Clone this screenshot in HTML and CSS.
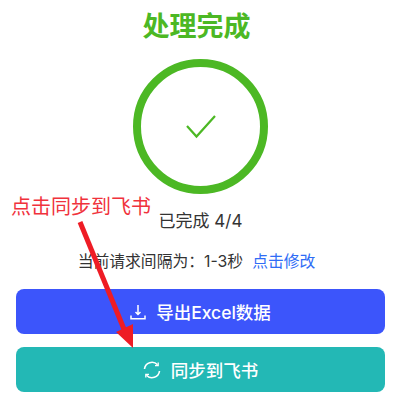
FILE: index.html
```html
<!DOCTYPE html>
<html lang="zh-CN">
<head>
  <meta charset="UTF-8">
  <meta name="viewport" content="width=device-width, initial-scale=1.0">
  <title>处理完成</title>
  <link rel="stylesheet" href="styles.css">
</head>
<body>
  <div class="page">
    <h1 class="title">处理完成</h1>

    <div class="ring">
      <svg class="check" viewBox="0 0 30 24" width="30" height="24">
        <path d="M1 11 L10.500 21.500 L29 1" fill="none" stroke="#4cb824" stroke-width="2.200"/>
      </svg>
    </div>

    <div class="progress">已完成 4/4</div>

    <div class="interval">
      <span>当前请求间隔为：1-3秒</span>
      <a class="edit-link">点击修改</a>
    </div>

    <button class="btn btn-export">
      <svg viewBox="0 0 16 16" width="16" height="16">
        <path d="M8 1 V10.500 M5.500 8 L8 10.500 L10.500 8 M1 11.500 V14.800 H15 V11.500" fill="none" stroke="#fff" stroke-width="1.500"/>
      </svg>
      导出Excel数据
    </button>

    <button class="btn btn-sync">
      <svg viewBox="0 0 18 18" width="18" height="18">
        <path d="M1.500 8 A7.500 7.500 0 0 1 14.500 3.800 M16.500 10 A7.500 7.500 0 0 1 3.500 14.200" fill="none" stroke="#fff" stroke-width="1.600"/>
        <path d="M12 4.700 H15.200 V1.600 M6 13.300 H2.800 V16.400" fill="none" stroke="#fff" stroke-width="1.300"/>
      </svg>
      同步到飞书
    </button>
  </div>

  <!-- annotation drawn over the screenshot -->
  <div class="note">点击同步到飞书</div>
  <svg class="arrow" viewBox="0 0 400 400" width="400" height="400">
    <path d="M80 222 L126 334" stroke="#ee1c25" stroke-width="5" fill="none"/>
    <path d="M133 348 L116 332 L133 324 Z" fill="#ee1c25"/>
  </svg>
</body>
</html>
```

FILE: styles.css
```css
body {
  margin: 0;
  background-color: #fff;
  font-family: Inter, "Noto Sans CJK SC", sans-serif;
  color: #333;
  overflow: hidden;
}

.page {
  display: flex;
  flex-direction: column;
  align-items: center;
  padding: 0 15px 0 16px;
  height: 400px;
  box-sizing: border-box;
}

.title {
  margin: 9px 8px 0 0;
  font-size: 27px;
  line-height: 36px;
  font-weight: 700;
  color: #4cb824;
}

.ring {
  margin-top: 14px;
  width: 135px;
  height: 135px;
  box-sizing: border-box;
  border: 8px solid #4cb824;
  border-radius: 50%;
  display: flex;
  align-items: center;
  justify-content: center;
}

.progress {
  margin-top: 15px;
  font-size: 17px;
  line-height: 24px;
}

.interval {
  margin: 18px 8px 0 0;
  display: flex;
  gap: 9px;
  font-size: 15.800px;
  line-height: 22px;
}

.edit-link {
  color: #2f6cf6;
}

.btn {
  width: 100%;
  height: 45px;
  border: none;
  border-radius: 8px;
  display: flex;
  align-items: center;
  justify-content: center;
  gap: 10px;
  color: #fff;
  font-family: inherit;
  font-size: 17.500px;
  font-weight: 500;
}

.btn-export {
  margin-top: 16px;
  background-color: #3c55fb;
}

.btn-sync {
  margin-top: 13px;
  background-color: #23b8b5;
}

.note {
  position: absolute;
  top: 194px;
  left: 11px;
  font-size: 20px;
  line-height: 26px;
  color: #f0323c;
}

.arrow {
  position: absolute;
  top: 0;
  left: 0;
}
```
